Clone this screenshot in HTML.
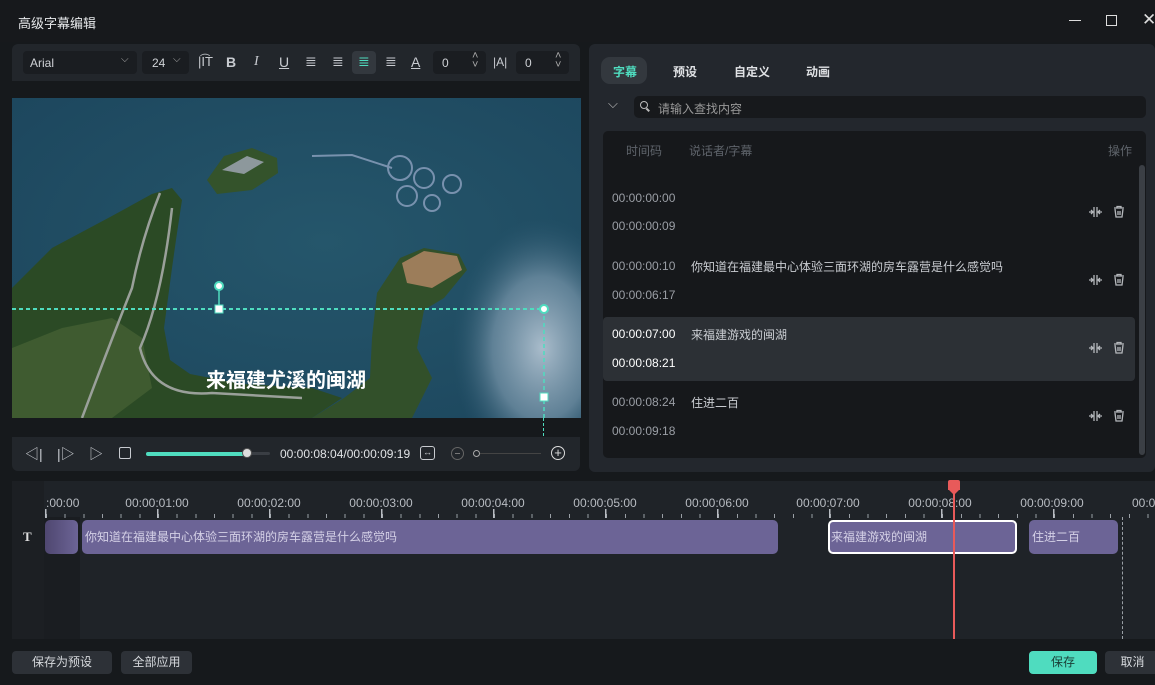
<!DOCTYPE html>
<html><head><meta charset="utf-8"><style>
*{box-sizing:border-box;margin:0;padding:0}
body{width:1155px;height:685px;overflow:hidden;background:#16191c;font-family:"Liberation Sans","Noto Sans CJK SC",sans-serif;color:#d0d3d8;position:relative;font-size:12px}
.a{position:absolute}
.tb{background:#22262b}
.ic{color:#c8cbd0;font-size:14px}
.row{position:absolute;left:603px;width:532px;height:64px}
.row .t{position:absolute;left:9px;font-size:12px;color:#9a9ea5}
.row .s{position:absolute;left:88px;top:9px;font-size:12px;color:#c9ccd1}
.row svg{position:absolute;left:485px;top:24px}
.lbl{position:absolute;top:496px;font-size:12px;color:#b8bcc2;transform:translateX(-50%)}
.clip{position:absolute;top:520px;height:34px;background:#6c6496;border-radius:5px;color:#d4d0e6;font-size:12px;line-height:34px;padding-left:3px;white-space:nowrap}
.btn{position:absolute;top:651px;height:23px;border-radius:4px;background:#2d3137;color:#d6d9dd;font-size:12px;line-height:23px;text-align:center}
</style></head><body>
<div class="a" style="left:0;top:0;width:1155px;height:42px;background:#17191c"></div>
<div class="a" style="left:18px;top:13px;font-size:13px;color:#e6e8ea">高级字幕编辑</div>
<div class="a" style="left:1069px;top:20px;width:12px;height:1px;background:#ddd"></div>
<div class="a" style="left:1106px;top:15px;width:11px;height:11px;border:1.5px solid #ddd"></div>
<div class="a" style="left:1142px;top:10px;font-size:17px;color:#ddd">✕</div>

<div class="a tb" style="left:12px;top:44px;width:568px;height:37px;border-radius:6px 6px 0 0"></div>
<div class="a" style="left:23px;top:51px;width:114px;height:23px;background:#1a1d21;border-radius:4px"></div>
<div class="a" style="left:30px;top:56px;color:#cfd2d6">Arial</div>
<div class="a" style="left:121px;top:54px;color:#aaa;font-size:10px">⌵</div>
<div class="a" style="left:142px;top:51px;width:47px;height:23px;background:#1a1d21;border-radius:4px"></div>
<div class="a" style="left:152px;top:56px;color:#cfd2d6">24</div>
<div class="a" style="left:173px;top:54px;color:#aaa;font-size:10px">⌵</div>
<div class="a ic" style="left:198px;top:54px;font-size:13px">|I͡T</div>
<div class="a ic" style="left:226px;top:54px;font-weight:bold">B</div>
<div class="a ic" style="left:254px;top:54px;font-style:italic;font-family:'Liberation Serif',serif">I</div>
<div class="a ic" style="left:279px;top:54px;text-decoration:underline">U</div>
<div class="a ic" style="left:305px;top:53px">≣</div>
<div class="a ic" style="left:332px;top:53px">≣</div>
<div class="a" style="left:352px;top:51px;width:24px;height:23px;background:#33383e;border-radius:4px"></div>
<div class="a ic" style="left:358px;top:53px;color:#4fdcbf">≣</div>
<div class="a ic" style="left:385px;top:53px">≣</div>
<div class="a ic" style="left:411px;top:54px;text-decoration:underline">A</div>
<div class="a" style="left:433px;top:51px;width:53px;height:23px;background:#1a1d21;border-radius:4px"></div>
<div class="a" style="left:442px;top:56px;color:#cfd2d6">0</div>
<div class="a" style="left:472px;top:52px;color:#aaa;font-size:11px;line-height:9px">˄<br>˅</div>
<div class="a ic" style="left:493px;top:55px;font-size:12px">|A|</div>
<div class="a" style="left:516px;top:51px;width:53px;height:23px;background:#1a1d21;border-radius:4px"></div>
<div class="a" style="left:525px;top:56px;color:#cfd2d6">0</div>
<div class="a" style="left:555px;top:52px;color:#aaa;font-size:11px;line-height:9px">˄<br>˅</div>

<svg class="a" style="left:12px;top:98px" width="569" height="320" viewBox="0 0 569 320">
<defs>
<radialGradient id="w" cx="0.55" cy="0.45" r="0.7"><stop offset="0" stop-color="#25566b"/><stop offset="1" stop-color="#1d475e"/></radialGradient>
<radialGradient id="r" cx="0.5" cy="0.5" r="0.5"><stop offset="0" stop-color="#a9bccb"/><stop offset="0.55" stop-color="#6f8ea3" stop-opacity="0.8"/><stop offset="1" stop-color="#2c5870" stop-opacity="0"/></radialGradient>
</defs>
<rect width="569" height="320" fill="url(#w)"/>
<ellipse cx="530" cy="250" rx="90" ry="130" fill="url(#r)"/>
<path d="M0 190 L40 150 L100 118 L140 96 L160 90 L170 102 L165 135 L160 170 L152 230 L158 262 L178 276 L230 286 L300 290 L330 300 L300 320 L0 320Z" fill="#2b4a25"/>
<path d="M0 250 L50 230 L100 220 L130 240 L140 290 L100 320 L0 320Z" fill="#3f5b30"/>
<path d="M195 82 L212 58 L240 50 L265 60 L266 75 L240 92 L205 96Z" fill="#34532b"/>
<path d="M210 72 L235 58 L252 64 L232 76Z" fill="#8d989c"/>
<path d="M365 195 L388 160 L412 150 L447 156 L455 172 L432 200 L412 212 L405 250 L420 280 L400 320 L300 320 L332 300 L358 280 L360 240Z" fill="#32502a"/>
<path d="M390 165 L412 153 L445 158 L450 172 L420 190 L395 185Z" fill="#9c7d5a"/>
<path d="M148 95 Q130 140 120 190 Q100 240 70 320" stroke="#9aa09a" stroke-width="2.5" fill="none"/>
<path d="M160 110 Q150 200 128 250 Q140 300 200 295 L290 300" stroke="#9aa09a" stroke-width="2.5" fill="none"/>
<g stroke="#8ea2c0" stroke-width="2" fill="none" opacity="0.8"><circle cx="388" cy="70" r="12"/><circle cx="412" cy="80" r="10"/><circle cx="440" cy="86" r="9"/><circle cx="395" cy="98" r="10"/><circle cx="420" cy="105" r="8"/><path d="M300 58 L340 57 L380 70"/></g>
<text x="194" y="289" font-family="'Noto Sans CJK SC',sans-serif" font-size="20" font-weight="bold" fill="#fff">来福建尤溪的闽湖</text>
<line x1="0" y1="211" x2="532" y2="211" stroke="#4fdcbf" stroke-width="2" stroke-dasharray="4 3"/>
<line x1="532" y1="211" x2="532" y2="320" stroke="#4fdcbf" stroke-width="1.5" stroke-dasharray="4 3"/>
<line x1="207" y1="188" x2="207" y2="211" stroke="#4fdcbf" stroke-width="1.5"/>
<circle cx="207" cy="188" r="4" fill="#fff" stroke="#4fdcbf" stroke-width="2"/>
<rect x="203" y="207" width="8" height="8" fill="#fff" stroke="#4fdcbf"/>
<circle cx="532" cy="211" r="4" fill="#fff" stroke="#4fdcbf" stroke-width="2"/>
<rect x="528" y="295" width="8" height="8" fill="#fff" stroke="#4fdcbf"/>
</svg>
<div class="a" style="left:543px;top:418px;height:18px;border-left:1.5px dashed #4fdcbf"></div>

<div class="a tb" style="left:12px;top:437px;width:568px;height:34px;border-radius:0 0 6px 6px"></div>
<div class="a ic" style="left:25px;top:444px;font-size:14px">◁|</div>
<div class="a ic" style="left:57px;top:444px;font-size:14px">|▷</div>
<div class="a ic" style="left:89px;top:444px;font-size:14px">▷</div>
<div class="a" style="left:119px;top:447px;width:12px;height:12px;border:1.5px solid #c8cbd0;border-radius:2px"></div>
<div class="a" style="left:146px;top:452px;width:124px;height:3px;background:#3a3e44;border-radius:2px"></div>
<div class="a" style="left:146px;top:452px;width:102px;height:4px;background:#4fdcbf;border-radius:2px"></div>
<div class="a" style="left:242px;top:448px;width:10px;height:10px;background:#ddd;border-radius:50%;border:1px solid #555"></div>
<div class="a" style="left:280px;top:447px;color:#e1e3e6;font-size:12px">00:00:08:04/00:00:09:19</div>
<div class="a" style="left:420px;top:446px;width:15px;height:14px;border:1.5px solid #c8cbd0;border-radius:3px;font-size:9px;line-height:11px;text-align:center;color:#c8cbd0">↔</div>
<div class="a" style="left:451px;top:447px;width:13px;height:13px;border:1px solid #666;border-radius:50%"></div>
<div class="a" style="left:455px;top:453px;width:5px;height:1px;background:#777"></div>
<div class="a" style="left:473px;top:450px;width:7px;height:7px;border:1.5px solid #aaa;border-radius:50%"></div>
<div class="a" style="left:480px;top:453px;width:61px;height:1px;background:#444"></div>
<div class="a" style="left:551px;top:446px;width:14px;height:14px;border:1.5px solid #ddd;border-radius:50%;font-size:13px;line-height:11px;text-align:center;color:#ddd">+</div>

<div class="a" style="left:589px;top:44px;width:566px;height:428px;background:#23272d;border-radius:6px"></div>
<div class="a" style="left:601px;top:57px;width:46px;height:27px;background:#33383e;border-radius:9px"></div>
<div class="a" style="left:613px;top:63px;color:#4fdcbf;font-size:12px;font-weight:bold">字幕</div>
<div class="a" style="left:673px;top:63px;color:#e0e2e5;font-size:12px;font-weight:bold">预设</div>
<div class="a" style="left:734px;top:63px;color:#e0e2e5;font-size:12px;font-weight:bold">自定义</div>
<div class="a" style="left:806px;top:63px;color:#e0e2e5;font-size:12px;font-weight:bold">动画</div>
<div class="a" style="left:608px;top:96px;color:#bbb;font-size:13px">⌵</div>
<div class="a" style="left:634px;top:96px;width:512px;height:22px;background:#17191c;border-radius:5px"></div>
<div class="a" style="left:640px;top:101px;width:8px;height:8px;border:1.5px solid #bbb;border-radius:50%"></div>
<div class="a" style="left:646px;top:109px;width:4px;height:1.5px;background:#bbb;transform:rotate(45deg)"></div>
<div class="a" style="left:658px;top:100px;color:#999;font-size:12px">请输入查找内容</div>
<div class="a" style="left:603px;top:131px;width:543px;height:327px;background:#16181b;border-radius:5px"></div>
<div class="a" style="left:626px;top:142px;color:#5f646b;font-size:12px">时间码</div>
<div class="a" style="left:689px;top:142px;color:#5f646b;font-size:12px">说话者/字幕</div>
<div class="a" style="left:1108px;top:142px;color:#5f646b;font-size:12px">操作</div>
<div class="a" style="left:1139px;top:165px;width:6px;height:290px;background:#3b3f45;border-radius:3px"></div>

<div class="row" style="top:181px"><div class="t" style="top:10px">00:00:00:00</div><div class="t" style="top:38px">00:00:00:09</div>
<svg width="40" height="14" viewBox="0 0 40 14" fill="none" stroke="#b5b8bc" stroke-width="1.3"><path d="M6 2v10M9 2v10M1 7h4M3 5l2 2-2 2M10 7h4M12 5l-2 2 2 2"/><path d="M26 3h10M29 3V1.5h4V3M27 4l1 8h6l1-8M30 6v4M32 6v4"/></svg></div>
<div class="row" style="top:249px"><div class="t" style="top:10px">00:00:00:10</div><div class="t" style="top:39px">00:00:06:17</div><div class="s">你知道在福建最中心体验三面环湖的房车露营是什么感觉吗</div>
<svg width="40" height="14" viewBox="0 0 40 14" fill="none" stroke="#b5b8bc" stroke-width="1.3"><path d="M6 2v10M9 2v10M1 7h4M3 5l2 2-2 2M10 7h4M12 5l-2 2 2 2"/><path d="M26 3h10M29 3V1.5h4V3M27 4l1 8h6l1-8M30 6v4M32 6v4"/></svg></div>
<div class="row" style="top:317px;background:#2c3035;border-radius:4px"><div class="t" style="top:10px;color:#fff">00:00:07:00</div><div class="t" style="top:39px;color:#fff">00:00:08:21</div><div class="s">来福建游戏的闽湖</div>
<svg width="40" height="14" viewBox="0 0 40 14" fill="none" stroke="#b5b8bc" stroke-width="1.3"><path d="M6 2v10M9 2v10M1 7h4M3 5l2 2-2 2M10 7h4M12 5l-2 2 2 2"/><path d="M26 3h10M29 3V1.5h4V3M27 4l1 8h6l1-8M30 6v4M32 6v4"/></svg></div>
<div class="row" style="top:385px"><div class="t" style="top:10px">00:00:08:24</div><div class="t" style="top:39px">00:00:09:18</div><div class="s">住进二百</div>
<svg width="40" height="14" viewBox="0 0 40 14" fill="none" stroke="#b5b8bc" stroke-width="1.3"><path d="M6 2v10M9 2v10M1 7h4M3 5l2 2-2 2M10 7h4M12 5l-2 2 2 2"/><path d="M26 3h10M29 3V1.5h4V3M27 4l1 8h6l1-8M30 6v4M32 6v4"/></svg></div>

<div class="a" style="left:12px;top:481px;width:1143px;height:158px;background:#1f2328;border-radius:6px 0 0 0"></div>
<div class="a" style="left:12px;top:481px;width:32px;height:158px;background:#1c1f23"></div>
<div class="a" style="left:44px;top:517px;width:36px;height:122px;background:#1a1d21"></div>
<div class="a" style="left:23px;top:529px;color:#ddd;font-size:13px;font-weight:bold;font-family:'Liberation Serif',serif">T</div>
<div class="a" style="left:46px;top:509px;width:1110px;height:9px;background:repeating-linear-gradient(90deg,#9aa0a6 0 1px,transparent 1px 18.67px);background-position:0 5px;background-size:auto 4px;background-repeat:repeat-x"></div>
<div class="a" style="left:45px;top:509px;width:1110px;height:9px;background:repeating-linear-gradient(90deg,#b8bcc2 0 1.5px,transparent 1.5px 112px)"></div>
<div class="a" style="left:46px;top:496px;font-size:12px;color:#b8bcc2">:00:00</div>
<div class="lbl" style="left:157px">00:00:01:00</div>
<div class="lbl" style="left:269px">00:00:02:00</div>
<div class="lbl" style="left:381px">00:00:03:00</div>
<div class="lbl" style="left:493px">00:00:04:00</div>
<div class="lbl" style="left:605px">00:00:05:00</div>
<div class="lbl" style="left:717px">00:00:06:00</div>
<div class="lbl" style="left:828px">00:00:07:00</div>
<div class="lbl" style="left:940px">00:00:08:00</div>
<div class="lbl" style="left:1052px">00:00:09:00</div>
<div class="a" style="left:1132px;top:496px;font-size:12px;color:#b8bcc2">00:0</div>
<div class="clip" style="left:45px;width:33px;background:linear-gradient(90deg,#4f4770,#6c6496)"></div>
<div class="clip" style="left:82px;width:696px">你知道在福建最中心体验三面环湖的房车露营是什么感觉吗</div>
<div class="clip" style="left:828px;width:189px;border:2px solid #fff;line-height:30px;padding-left:1px">来福建游戏的闽湖</div>
<div class="clip" style="left:1029px;width:89px">住进二百</div>
<div class="a" style="left:1122px;top:517px;height:122px;border-left:1.5px dashed #9aa0a6"></div>
<div class="a" style="left:953px;top:481px;width:2px;height:158px;background:#e85a5a"></div>
<div class="a" style="left:948px;top:480px;width:12px;height:10px;background:#e85a5a;border-radius:2px 2px 0 0"></div>
<div class="a" style="left:948px;top:489px;width:0;height:0;border-left:6px solid transparent;border-right:6px solid transparent;border-top:6px solid #e85a5a"></div>

<div class="btn" style="left:12px;width:100px">保存为预设</div>
<div class="btn" style="left:121px;width:71px">全部应用</div>
<div class="btn" style="left:1029px;width:68px;background:#4fdcbf;color:#1a3d35">保存</div>
<div class="btn" style="left:1105px;width:55px">取消</div>
</body></html>
